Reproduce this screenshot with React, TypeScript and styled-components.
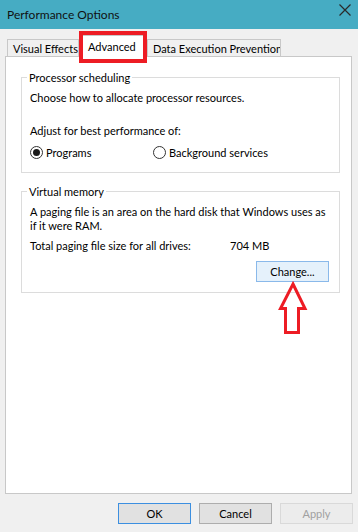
import React from "react";
import styled, { createGlobalStyle } from "styled-components";

const FONT = `Lato, "Liberation Sans", sans-serif`;

const Global = createGlobalStyle`
  html, body { margin: 0; padding: 0; background: #f0f0f0; }
  body { font-family: ${FONT}; font-size: 11px; color: #000; }
  * { box-sizing: border-box; }
`;

const Window = styled.div`
  width: 358px;
  height: 532px;
  background: #f0f0f0;
  display: flex;
  flex-direction: column;
  overflow: hidden;
`;

const TitleBar = styled.div`
  height: 29px;
  flex: none;
  background: #46acc3;
  display: flex;
  align-items: center;
  justify-content: space-between;
  padding: 0 7px 0 7px;
`;

const Title = styled.div`
  font-size: 12px;
  line-height: 16px;
  color: #111;
  margin-top: 1px;
`;

const CloseIcon = styled.svg`
  align-self: flex-start;
  margin-top: 4px;
  width: 12px;
  height: 12px;
`;

const TabStrip = styled.div`
  position: relative;
  z-index: 1;
  height: 27px;
  flex: none;
  display: flex;
  align-items: flex-end;
  padding-left: 7px;
`;

const Tab = styled.div<{ $w: number; $selected?: boolean }>`
  width: ${(p) => p.$w}px;
  height: ${(p) => (p.$selected ? 22 : 17)}px;
  margin-bottom: ${(p) => (p.$selected ? -1 : 0)}px;
  background: ${(p) => (p.$selected ? "#ffffff" : "#f0f0f0")};
  border: 1px solid #c8c8c8;
  border-bottom: none;
  padding: ${(p) => (p.$selected ? "3px 0 0 8px" : "1px 0 0 5px")};
  font-size: 11px;
  line-height: 15px;
  white-space: nowrap;
  overflow: hidden;
`;

const RedBox = styled.div`
  position: absolute;
  left: 79px;
  top: 2px;
  width: 68px;
  height: 32px;
  border: 4px solid #ed1c24;
  pointer-events: none;
`;

const Panel = styled.div`
  position: relative;
  height: 438px;
  flex: none;
  margin: 0 6px 0 5px;
  background: #ffffff;
  border: 1px solid #c8c8c8;
  padding-top: 13px;
`;

const Group = styled.fieldset<{ $gap?: number }>`
  margin: ${(p) => p.$gap ?? 0}px 0 0 15px;
  width: 319px;
  min-width: 0;
  border: 1px solid #dcdcdc;
  padding: 0 8px 0 8px;
`;

const Legend = styled.legend`
  padding: 0 2px;
  margin-left: -3px;
  line-height: 15px;
  font-size: 11px;
`;

const Text = styled.div<{ $mt: number; $lh?: number }>`
  margin-top: ${(p) => p.$mt}px;
  line-height: ${(p) => p.$lh ?? 15}px;
  white-space: nowrap;
`;

const RadioRow = styled.div`
  margin-top: 7px;
  height: 15px;
  display: grid;
  grid-template-columns: 123px auto;
  align-items: center;
  margin-bottom: 12px;
`;

const RadioItem = styled.label`
  display: flex;
  align-items: center;
  gap: 3px;
  line-height: 15px;
`;

const RadioCircle = styled.span<{ $checked?: boolean }>`
  width: 13px;
  height: 13px;
  border-radius: 50%;
  border: 1px solid #333333;
  background: #ffffff;
  display: flex;
  align-items: center;
  justify-content: center;
  &::after {
    content: "";
    width: 7px;
    height: 7px;
    border-radius: 50%;
    background: ${(p) => (p.$checked ? "#1a1a1a" : "transparent")};
  }
`;

const TotalRow = styled.div`
  margin-top: 5px;
  line-height: 15px;
  display: grid;
  grid-template-columns: 200px auto;
  white-space: nowrap;
`;

const ChangeRow = styled.div`
  display: flex;
  justify-content: flex-end;
  margin-top: 8px;
  padding-right: 2px;
  margin-bottom: 10px;
`;

const Button = styled.button<{ $variant?: "default" | "normal" | "disabled" | "hover" }>`
  width: 73px;
  height: 21px;
  padding: 0;
  font-family: ${FONT};
  font-size: 11px;
  line-height: 15px;
  color: ${(p) => (p.$variant === "disabled" ? "#a0a0a0" : "#000")};
  background: ${(p) =>
    p.$variant === "hover" ? "#e5f1fb" : p.$variant === "disabled" ? "#ececec" : "#e1e1e1"};
  border: 1px solid
    ${(p) =>
      p.$variant === "default"
        ? "#3c8fe0"
        : p.$variant === "hover"
        ? "#8ab9ea"
        : p.$variant === "disabled"
        ? "#d9d9d9"
        : "#adadad"};
`;

const Footer = styled.div`
  display: flex;
  justify-content: flex-end;
  gap: 8px;
  margin-top: 9px;
  padding-right: 5px;
`;

const Arrow = styled.svg`
  position: absolute;
  left: 270px;
  top: 223px;
  width: 34px;
  height: 56px;
  pointer-events: none;
`;

export default function App() {
  return (
    <>
      <Global />
      <Window>
        <TitleBar>
          <Title>Performance Options</Title>
          <CloseIcon viewBox="0 0 12 12">
            <path d="M0.5 0.5 L11.5 11.5 M11.5 0.5 L0.5 11.5" stroke="#2a2a2a" strokeWidth="1.2" fill="none" />
          </CloseIcon>
        </TitleBar>
        <TabStrip>
          <Tab $w={72}>Visual Effects</Tab>
          <Tab $w={68} $selected>
            Advanced
          </Tab>
          <Tab $w={134}>Data Execution Prevention</Tab>
          <RedBox />
        </TabStrip>
        <Panel>
          <Group>
            <Legend>Processor scheduling</Legend>
            <Text $mt={5}>Choose how to allocate processor resources.</Text>
            <Text $mt={18}>Adjust for best performance of:</Text>
            <RadioRow>
              <RadioItem>
                <RadioCircle $checked />
                Programs
              </RadioItem>
              <RadioItem>
                <RadioCircle />
                Background services
              </RadioItem>
            </RadioRow>
          </Group>
          <Group $gap={11}>
            <Legend>Virtual memory</Legend>
            <Text $mt={6} $lh={14}>
              A paging file is an area on the hard disk that Windows uses as
              <br />
              if it were RAM.
            </Text>
            <TotalRow>
              <span>Total paging file size for all drives:</span>
              <span>704 MB</span>
            </TotalRow>
            <ChangeRow>
              <Button $variant="hover">Change...</Button>
            </ChangeRow>
          </Group>
          <Arrow viewBox="0 0 34 56">
            <path
              d="M17 4 L29 28.5 L22.5 28.5 L22.5 52.5 L9.5 52.5 L9.5 28.5 L4.5 28.5 Z"
              fill="none"
              stroke="#ed1c24"
              strokeWidth="3"
              strokeLinejoin="miter"
            />
          </Arrow>
        </Panel>
        <Footer>
          <Button $variant="default">OK</Button>
          <Button $variant="normal">Cancel</Button>
          <Button $variant="disabled">Apply</Button>
        </Footer>
      </Window>
    </>
  );
}
